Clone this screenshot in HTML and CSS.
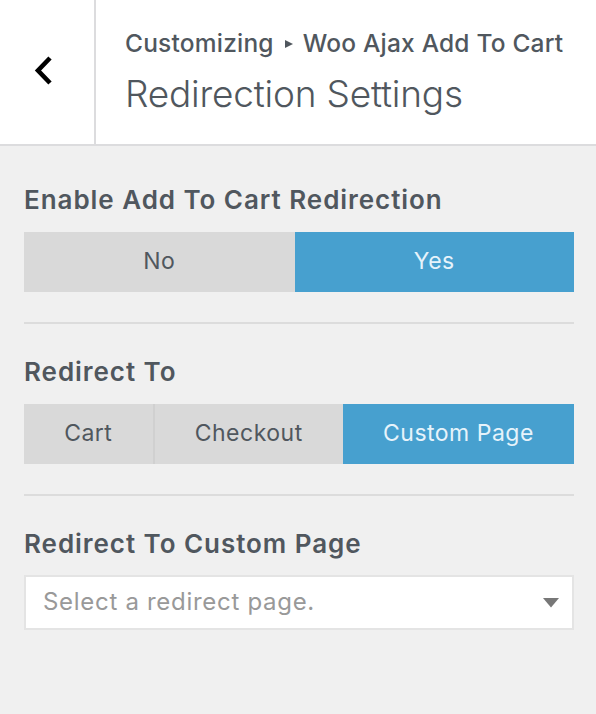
FILE: index.html
```html
<!DOCTYPE html>
<html lang="en">
<head>
<meta charset="utf-8">
<title>Redirection Settings</title>
<link rel="stylesheet" href="styles.css">
</head>
<body>
<div class="panel">
  <header class="panel-header">
    <button class="back" type="button" aria-label="Back">
      <svg width="20" height="32" viewBox="0 0 20 32" aria-hidden="true">
        <polyline points="16,3 4,15.5 16,28" fill="none" stroke="#000" stroke-width="4.6" stroke-linecap="butt" stroke-linejoin="miter"/>
      </svg>
    </button>
    <div class="titles">
      <div class="crumb">Customizing<svg class="crumb-arrow" width="8" height="8" viewBox="0 0 8 8" aria-hidden="true"><polygon points="0,0 8,4 0,8" fill="#50575e"/></svg>Woo Ajax Add To Cart</div>
      <h2 class="title">Redirection Settings</h2>
    </div>
  </header>

  <div class="content">
    <section class="control">
      <div class="label">Enable Add To Cart Redirection</div>
      <div class="seg">
        <span class="seg-btn">No</span>
        <span class="seg-btn active">Yes</span>
      </div>
    </section>
    <hr class="divider">
    <section class="control">
      <div class="label">Redirect To</div>
      <div class="seg">
        <span class="seg-btn">Cart</span>
        <span class="seg-btn">Checkout</span>
        <span class="seg-btn active">Custom Page</span>
      </div>
    </section>
    <hr class="divider">
    <section class="control control-select">
      <div class="label">Redirect To Custom Page</div>
      <div class="select">
        <span class="placeholder">Select a redirect page.</span>
        <svg class="caret" width="16" height="10" viewBox="0 0 16 10" aria-hidden="true"><polygon points="0,0 16,0 8,9.5" fill="#777"/></svg>
      </div>
    </section>
  </div>
</div>
</body>
</html>
```
FILE: styles.css
```css
* { box-sizing: border-box; }
html, body {
  margin: 0;
  padding: 0;
  background: #f0f0f0;
  font-family: Inter, "Noto Sans", "Liberation Sans", sans-serif;
  color: #50575e;
}
.panel {
  width: 596px;
  min-height: 714px;
  background: #f0f0f0;
}
.panel-header {
  display: flex;
  height: 146px;
  background: #fff;
  border-bottom: 2px solid #dcdcde;
}
.back {
  flex: 0 0 96px;
  height: 144px;
  border: none;
  border-right: 2px solid #dcdcde;
  background: #fff;
  display: flex;
  align-items: center;
  justify-content: flex-start;
  padding: 0 0 2px 34px;
}
.back svg { display: block; }
.titles {
  padding: 27px 0 0 29px;
}
.crumb {
  font-size: 24.5px;
  font-weight: 500;
  line-height: 32px;
  color: #50575e;
  letter-spacing: 0.2px;
  white-space: nowrap;
}
.crumb-arrow {
  margin: 0 10px 2px 11px;
  vertical-align: middle;
}
.title {
  margin: 13px 0 0;
  font-size: 37px;
  font-weight: 300;
  line-height: 44px;
  color: #50575e;
  letter-spacing: -0.2px;
}
.content {
  padding: 36px 22px 0 24px;
}
.control {
  display: flex;
  flex-direction: column;
}
.label {
  font-size: 26px;
  font-weight: 600;
  line-height: 36px;
  color: #50575e;
  letter-spacing: 0.95px;
  margin-bottom: 14px;
}
.control-select .label { margin-bottom: 13px; }
.seg {
  display: flex;
  height: 60px;
}
.seg-btn {
  flex: 1 1 auto;
  display: flex;
  align-items: center;
  justify-content: center;
  background: #d9d9d9;
  font-size: 23px;
  letter-spacing: 0.5px;
  color: #50575e;
  padding-bottom: 2px;
}
.seg-btn + .seg-btn { border-left: 2px solid #d0d0d0; }
.seg-btn.active {
  background: #47a0cf;
  color: #e6f3fb;
  border-left: none;
}
.divider {
  border: none;
  height: 2px;
  background: #dcdcdc;
  margin: 30px 0 30px;
}
.select {
  display: flex;
  align-items: center;
  justify-content: space-between;
  height: 55px;
  background: #fff;
  border: 2px solid #e4e4e4;
  padding: 0 13px 2px 17px;
}
.placeholder {
  font-size: 24px;
  letter-spacing: 0.7px;
  color: #999;
}
.caret { display: block; margin-top: 2px; }
```
